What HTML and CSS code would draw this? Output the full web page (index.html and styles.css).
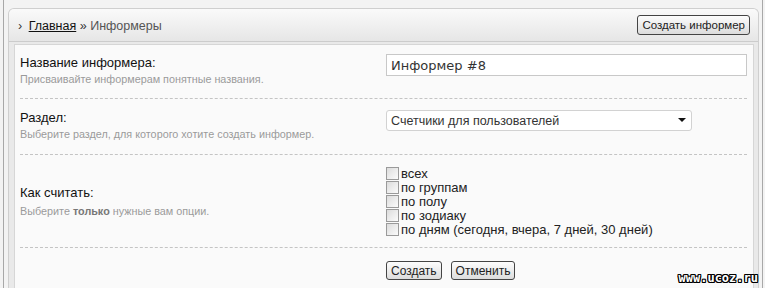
FILE: index.html
```html
<!DOCTYPE html>
<html lang="ru">
<head>
    <meta charset="UTF-8">
    <title>Информеры</title>
    <link rel="stylesheet" href="styles.css">
</head>
<body>
    <div class="frame">
        <div class="panel">
            <div class="head">
                <div class="crumbs">
                    <span class="arrow">›</span>
                    <a href="#" class="home">Главная</a>
                    <span class="sep">»</span>
                    <span class="current">Информеры</span>
                </div>
                <button class="btn">Создать информер</button>
            </div>

            <form class="box">
                <div class="row row-name">
                    <div class="caption">
                        <div class="label">Название информера:</div>
                        <div class="hint">Присваивайте информерам понятные названия.</div>
                    </div>
                    <div class="field">
                        <input type="text" class="text" value="Информер #8">
                    </div>
                </div>

                <div class="row row-section">
                    <div class="caption">
                        <div class="label">Раздел:</div>
                        <div class="hint">Выберите раздел, для которого хотите создать информер.</div>
                    </div>
                    <div class="field">
                        <div class="select">
                            <select>
                                <option>Счетчики для пользователей</option>
                            </select>
                        </div>
                    </div>
                </div>

                <div class="row row-count">
                    <div class="caption">
                        <div class="label">Как считать:</div>
                        <div class="hint">Выберите <b>только</b> нужные вам опции.</div>
                    </div>
                    <div class="field checks">
                        <label><input type="checkbox"> всех</label>
                        <label><input type="checkbox"> по группам</label>
                        <label><input type="checkbox"> по полу</label>
                        <label><input type="checkbox"> по зодиаку</label>
                        <label><input type="checkbox"> по дням (сегодня, вчера, 7 дней, 30 дней)</label>
                    </div>
                </div>

                <div class="row row-actions">
                    <div></div>
                    <div class="field actions">
                        <button type="button" class="btn">Создать</button>
                        <button type="button" class="btn">Отменить</button>
                    </div>
                </div>
            </form>
        </div>
        <div class="watermark">www.ucoz.ru</div>
    </div>
</body>
</html>
```

FILE: styles.css
```css
* {
    margin: 0;
    padding: 0;
    box-sizing: border-box;
}

body {
    background-color: #f3f3f3;
    font-family: 'Liberation Sans', Arial, sans-serif;
    color: #222222;
    overflow: hidden;
}

.frame {
    position: relative;
    height: 288px;
    overflow: hidden;
    margin: 0 2px 0 3px;
    border-left: 1px solid #a8a8a8;
    border-right: 1px solid #a8a8a8;
    padding: 8px 3px 0 4px;
}

.panel {
    height: 280px;
    background-color: #e9e9e9;
    border: 1px solid #cfcfcf;
    border-bottom: none;
    border-radius: 6px 6px 0 0;
}

.head {
    height: 33px;
    display: flex;
    align-items: center;
    justify-content: space-between;
    padding: 0 8px 0 9px;
    background: linear-gradient(#fafafa, #e6e6e6);
    border-bottom: 1px solid #cccccc;
    border-radius: 5px 5px 0 0;
}

.crumbs {
    font-size: 12.5px;
    color: #555555;
    padding-top: 2px;
}

.crumbs .arrow {
    color: #333333;
    margin-right: 3px;
}

.crumbs .home {
    color: #111111;
}

.crumbs .sep {
    color: #333333;
}

.btn {
    font-family: 'Liberation Sans', Arial, sans-serif;
    font-size: 11.5px;
    color: #222222;
    height: 20px;
    padding: 0 4px;
    background: linear-gradient(#fdfdfd, #dcdcdc);
    border: 1px solid #444444;
    border-radius: 3px;
}

.box {
    margin: 2px 4px 0 5px;
    height: 260px;
    background-color: #fafafa;
    border: 1px solid #d6d6d6;
    padding: 0 6px 0 5px;
}

.row {
    display: grid;
    grid-template-columns: 1fr 361px;
    border-bottom: 1px dashed #c4c4c4;
}

.row-name {
    padding: 9px 0 11px;
}

.row-section {
    padding: 10px 0 12px;
}

.row-count {
    padding: 11px 0 11px;
    align-items: center;
}

.row-actions {
    border-bottom: none;
    padding-top: 13px;
}

.label {
    font-size: 13px;
    line-height: 17px;
    color: #111111;
}

.hint {
    font-size: 10.8px;
    line-height: 16px;
    color: #9a9a9a;
}

.hint b {
    color: #777777;
}

.row-count .hint {
    margin-top: 2px;
}

.text {
    width: 100%;
    height: 22px;
    border: 1px solid #c8c8c8;
    background-color: #ffffff;
    padding: 0 4px;
    font-family: 'DejaVu Sans', Verdana, sans-serif;
    font-size: 13px;
    color: #333333;
}

.select {
    position: relative;
    width: 306px;
    margin-top: 1px;
}

.select select {
    appearance: none;
    width: 100%;
    height: 21px;
    border: 1px solid #d2d2d2;
    border-radius: 3px;
    background-color: #ffffff;
    padding: 0 4px;
    font-family: 'Liberation Sans', Arial, sans-serif;
    font-size: 12.5px;
    color: #333333;
}

.select::after {
    content: '';
    position: absolute;
    right: 6px;
    top: 8px;
    border-left: 4px solid transparent;
    border-right: 4px solid transparent;
    border-top: 4px solid #111111;
}

.checks label {
    display: flex;
    align-items: center;
    height: 14px;
    font-size: 13px;
    color: #222222;
}

.checks input {
    appearance: none;
    width: 13px;
    height: 13px;
    margin-right: 2px;
    border: 1px solid #9a9a9a;
    background: linear-gradient(135deg, #dcdcdc, #fbfbfb);
}

.actions {
    display: flex;
    gap: 9px;
}

.actions .btn {
    height: 19px;
    font-size: 12px;
}

.watermark {
    position: absolute;
    right: 4px;
    bottom: 3px;
    font-family: 'DejaVu Sans Mono', monospace;
    font-weight: bold;
    font-size: 12px;
    color: #ffffff;
    text-shadow: 1px 0 0 #000, -1px 0 0 #000, 0 1px 0 #000, 0 -1px 0 #000, 1px 1px 0 #000, -1px -1px 0 #000, 1px -1px 0 #000, -1px 1px 0 #000;
}
```
